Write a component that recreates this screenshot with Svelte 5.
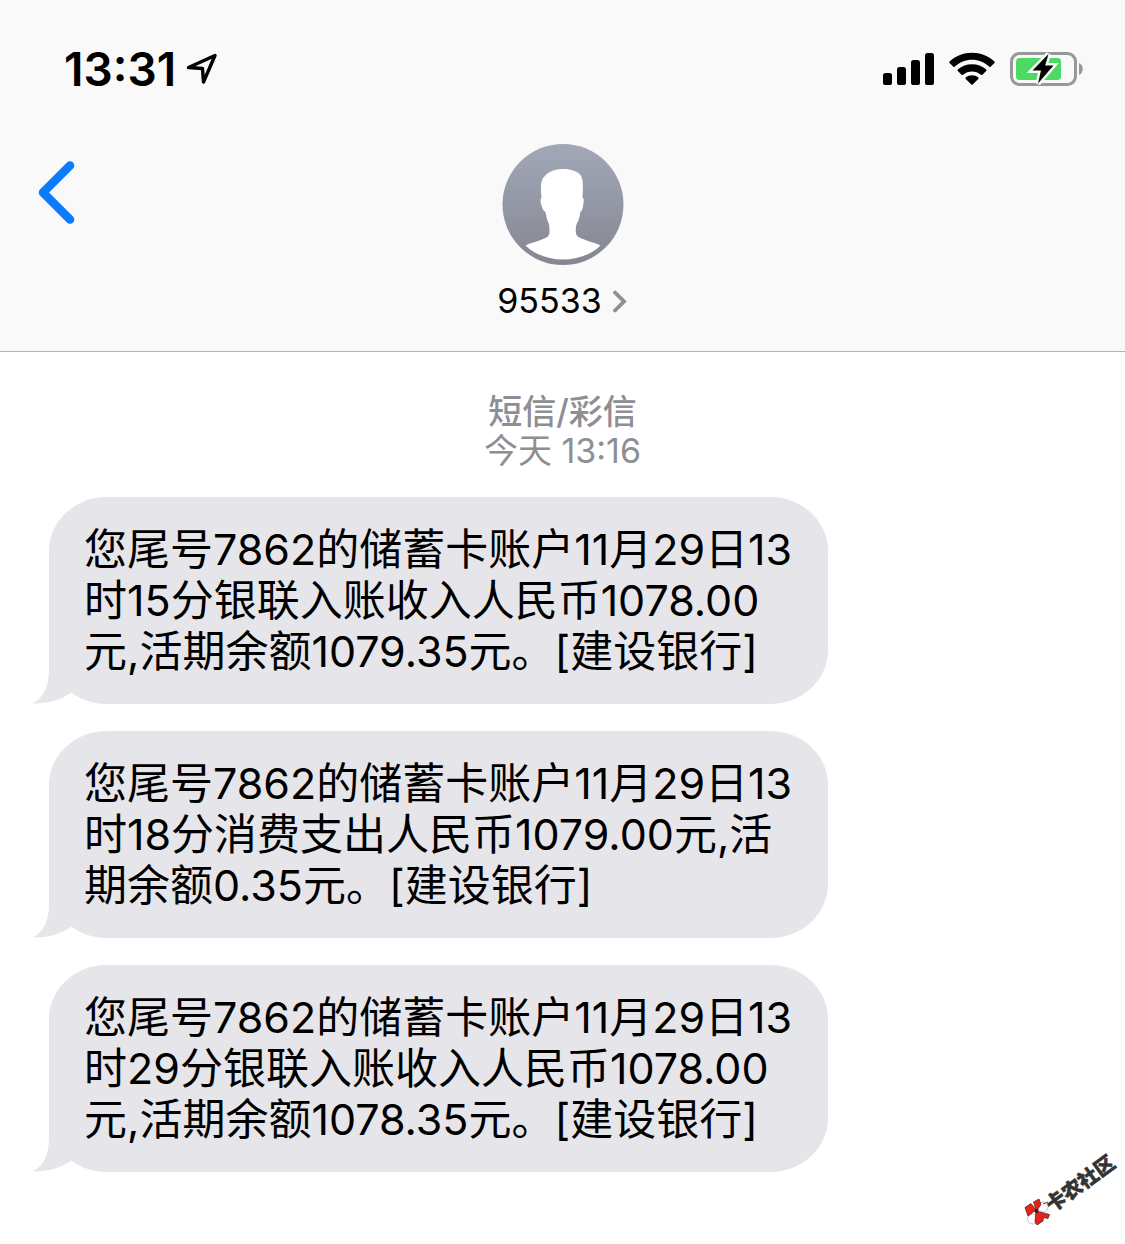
<script lang="ts">
  interface Message {
    id: number;
    text: string;
  }

  const time = '13:31';
  const contact = '95533';

  const messages: Message[] = [
    {
      id: 1,
      text: '您尾号7862的储蓄卡账户11月29日13时15分银联入账收入人民币1078.00元,活期余额1079.35元。[建设银行]'
    },
    {
      id: 2,
      text: '您尾号7862的储蓄卡账户11月29日13时18分消费支出人民币1079.00元,活期余额0.35元。[建设银行]'
    },
    {
      id: 3,
      text: '您尾号7862的储蓄卡账户11月29日13时29分银联入账收入人民币1078.00元,活期余额1078.35元。[建设银行]'
    }
  ];
</script>

<div class="screen">
  <header>
    <div class="status-bar">
      <div class="clock">
        <span>{time}</span>
        <svg width="32" height="32" viewBox="0 0 32 32" aria-hidden="true">
          <path
            d="M2.5 14.5 L29 2.5 L17.5 29 L16.5 15.500 Z"
            fill="none"
            stroke="#000"
            stroke-width="3.4"
            stroke-linejoin="round"
          />
        </svg>
      </div>
      <div class="indicators">
        <svg width="52" height="34" viewBox="0 0 52 34" aria-hidden="true">
          <rect x="1" y="21" width="9" height="12" rx="2.6" />
          <rect x="15" y="15" width="9" height="18" rx="2.6" />
          <rect x="29" y="8" width="9" height="25" rx="2.6" />
          <rect x="43" y="1" width="9" height="32" rx="2.6" />
        </svg>
        <svg width="46" height="34" viewBox="0 0 46 34" aria-hidden="true">
          <path d="M.6 9.6 C12.5-2.3 33.5-2.3 45.4 9.6 Q46 10.3 45.4 11 L41.6 14.8 Q41 15.2 40.4 14.8 C30.5 5.4 15.5 5.4 5.6 14.8 Q5 15.2 4.4 14.8 L.6 11 Q0 10.3 .6 9.6 Z" />
          <path d="M8.8 17.6 C16.5 10.4 29.5 10.4 37.2 17.6 Q37.8 18.3 37.2 19 L33.3 22.8 Q32.7 23.3 32 22.8 C27 18.3 19 18.3 14 22.8 Q13.3 23.3 12.7 22.8 L8.8 19 Q8.2 18.3 8.8 17.6 Z" />
          <path d="M16.7 25.6 C20.3 22.6 25.7 22.6 29.3 25.6 Q29.9 26.2 29.3 26.9 L23.6 32.5 Q23 33.1 22.4 32.5 L16.7 26.9 Q16.1 26.2 16.7 25.6 Z" />
        </svg>
        <svg width="74" height="38" viewBox="0 0 74 38" aria-hidden="true">
          <rect x="1.5" y="3.5" width="64" height="31" rx="8" fill="none" stroke="#98989a" stroke-width="3" />
          <path d="M69 13 C74 15 74 23 69 25 Z" fill="#98989a" />
          <rect x="6" y="8" width="45" height="22" rx="3.5" fill="#4cd964" />
          <path
            d="M38.5 4 L22.5 20.5 H31 L28 33.5 L43.5 15.5 H35.2 Z"
            fill="#000"
            stroke="#f9f9f9"
            stroke-width="5"
            paint-order="stroke"
          />
        </svg>
      </div>
    </div>

    <nav>
      <button type="button" class="back" aria-label="返回">
        <svg width="40" height="66" viewBox="0 0 40 66" aria-hidden="true">
          <path
            d="M33 5.5 L6 32.5 L33 59.5"
            fill="none"
            stroke="#0a7aff"
            stroke-width="8.6"
            stroke-linecap="round"
            stroke-linejoin="round"
          />
        </svg>
      </button>

      <button type="button" class="contact">
        <svg width="122" height="122" viewBox="0 0 122 122" aria-hidden="true">
          <defs>
            <linearGradient id="avatar-fill" x1="0" y1="0" x2="0" y2="1">
              <stop offset="0" stop-color="#a2a8b9" />
              <stop offset="1" stop-color="#858790" />
            </linearGradient>
          </defs>
          <circle cx="61" cy="60.5" r="60.5" fill="url(#avatar-fill)" />
          <path
            d="M60 25 C68 24.5 75 27 78.500 31 C81.5 34.5 81 43 80.5 54 C82 54 82 56 81.5 59 C81 63 80.5 67 78.3 68 C77.8 72 77.3 75 75 79 C73.800 82 73.800 84 73.800 88 C73.800 92 77 93.500 81 95 C88 98 94 99 98.500 101.500 C90 110 76 115.500 61 115.500 C46 115.500 32 110 23.500 101.500 C28 99 34 98 41 95 C45 93.500 47.500 92 47.500 88 C47.500 84 47.500 82 46.500 79 C44.700 75 44.300 72 43.500 68 C41 67 40 63 38.700 59 C38.500 56 38.500 54 39.500 54 C38.800 45 37.800 36 43 32 C45 29 51 25 60 25 Z"
            fill="#fff"
          />
        </svg>
        <span class="name">
          {contact}
          <svg width="16" height="24" viewBox="0 0 16 24" aria-hidden="true">
            <path
              d="M3 3.5 L12 12.5 L3 21.5"
              fill="none"
              stroke="#8e8e93"
              stroke-width="3.8"
              stroke-linecap="round"
            />
          </svg>
        </span>
      </button>
    </nav>
  </header>

  <main>
    <div class="meta">
      <strong>短信/彩信</strong>
      <span>今天 13:16</span>
    </div>

    <ul class="thread">
      {#each messages as message (message.id)}
        <li class="bubble">
          {message.text}
          <svg class="tail" width="50" height="54" viewBox="0 0 50 54" aria-hidden="true">
            <path d="M17 0 V20 C17 37 11 49 0 53.5 C16 54 28 50 39 43 L44 0 Z" fill="#e5e5ea" />
          </svg>
        </li>
      {/each}
    </ul>
  </main>

  <svg class="watermark" width="110" height="90" viewBox="0 0 110 90" role="img" aria-label="卡农社区">
    <text x="37" y="63" transform="rotate(-36 37 63)">卡农社区</text>
    <circle cx="28" cy="57" r="5" fill="#fff" stroke="#999" stroke-width=".6" />
    <circle cx="17.5" cy="69" r="5" fill="#fff" stroke="#999" stroke-width=".6" />
    <path d="M28 54 L33 52" stroke="#6a3a7a" stroke-width="1" />
    <path
      d="M10 57.5 L16 53.5 L21 60 L13 66 Z M18.500 52 L24 49 L26 54.500 L21.500 61 Z M21 61 L34.500 64.500 L33 68.500 L28.500 67.500 L28 71 L22 75 L20 72 Z"
      fill="#e5251c"
      stroke="#4a1512"
      stroke-width=".7"
    />
    <circle cx="21.5" cy="61" r="2" fill="#222" />
  </svg>
</div>

<style>
  :global(body) {
    background: #fff;
  }

  .screen {
    position: relative;
    min-height: 100vh;
    color: #000;
    font-family: Inter, 'Noto Sans CJK SC', sans-serif;
  }

  header {
    background: #f9f9f9;
    border-bottom: 1px solid #b2b2b2;
  }

  .status-bar {
    display: flex;
    align-items: center;
    justify-content: space-between;
    height: 138px;
    padding: 0 41px 0 64px;
  }

  .clock {
    display: flex;
    align-items: center;
    gap: 10px;
    font-size: 46px;
    font-weight: 600;
  }

  .indicators {
    display: flex;
    align-items: center;
    gap: 15px;
  }

  nav {
    display: grid;
    grid-template-columns: 1fr auto 1fr;
    align-items: start;
    padding: 6px 37px 31px;
  }

  button {
    padding: 0;
    border: 0;
    background: none;
    color: inherit;
    font: inherit;
    cursor: pointer;
  }

  svg {
    display: block;
    flex-shrink: 0;
  }

  .back {
    justify-self: start;
    margin-top: 16px;
  }

  .contact {
    display: flex;
    flex-direction: column;
    align-items: center;
    gap: 15px;
  }

  .name {
    display: flex;
    align-items: center;
    gap: 10px;
    font-size: 34px;
    line-height: 39px;
  }

  main {
    padding: 40px 49px 72px;
  }

  .meta {
    display: flex;
    flex-direction: column;
    align-items: center;
    color: #8e8e93;
    font-size: 34px;
    line-height: 39px;
  }

  .meta strong {
    font-weight: 500;
  }

  .thread {
    display: flex;
    flex-direction: column;
    align-items: flex-start;
    gap: 27px;
    margin: 27px 0 0;
    padding: 0;
    list-style: none;
  }

  .bubble {
    position: relative;
    box-sizing: border-box;
    max-width: 779px;
    padding: 27px 35px;
    border-radius: 58px / 54px;
    background: #e5e5ea;
    font-size: 43px;
    line-height: 51px;
  }

  .tail {
    position: absolute;
    bottom: 0;
    left: -17px;
  }

  .watermark {
    position: absolute;
    right: 0;
    bottom: 4px;
    overflow: visible;
  }

  .watermark text {
    fill: #333;
    stroke: #333;
    stroke-width: 0.5px;
    font-size: 20px;
    font-weight: 900;
  }
</style>
